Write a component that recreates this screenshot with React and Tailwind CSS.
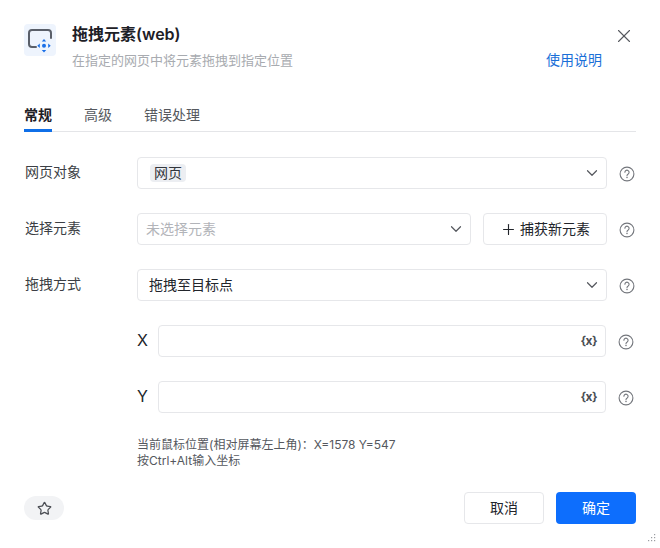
import { ChevronDown, Plus, Star, X } from "lucide-react";

const FONT = "[font-family:'Inter','Noto_Sans_CJK_SC',sans-serif]";

function Help() {
  return (
    <svg width="16" height="16" viewBox="0 0 16 16" fill="none" className="shrink-0 mt-0.5 text-[#73767c]">
      <circle cx="8" cy="8" r="6.9" stroke="currentColor" strokeWidth="1.1" />
      <path d="M5.900 6.300a2.100 2.100 0 1 1 3.300 1.700c-.8.500-1.200.900-1.200 1.700" stroke="currentColor" strokeWidth="1.100" strokeLinecap="round" />
      <circle cx="8" cy="11.600" r="0.750" fill="currentColor" />
    </svg>
  );
}

function Chevron() {
  return <ChevronDown className="w-[18px] h-[18px] text-[#55585e] shrink-0" strokeWidth={1.6} />;
}

function Row({ label, children }) {
  return (
    <div className="flex items-center mb-6">
      <div className="w-[113px] shrink-0 text-sm leading-8 text-[#3c3f45] pl-px -mt-0.5">{label}</div>
      <div className="w-[470px] shrink-0 flex gap-3">{children}</div>
      <div className="ml-3"><Help /></div>
    </div>
  );
}

function Box({ children, className = "" }) {
  return (
    <div className={`h-8 flex items-center justify-between rounded border border-[#e6e7ea] bg-white ${className}`}>
      {children}
    </div>
  );
}

function CoordRow({ label }) {
  return (
    <div className="flex items-center mb-6">
      <div className="w-[134px] shrink-0 pl-[113px] text-base leading-8 text-[#22252b] -mt-0.5">{label}</div>
      <Box className="w-[448px] pr-2">
        <span />
        <span className="text-xs font-bold text-[#4b4e54] tracking-tighter">{"{x}"}</span>
      </Box>
      <div className="ml-3"><Help /></div>
    </div>
  );
}

export default function App() {
  return (
    <div className={`${FONT} relative w-[660px] h-[548px] bg-white overflow-hidden px-6 pt-6`}>
      <div className="flex">
        <div className="w-8 h-8 rounded bg-[#eef4fd] shrink-0">
          <svg width="32" height="32" viewBox="0 0 32 32" fill="none">
            <path d="M12 23H8a3 3 0 0 1-3-3V9a3 3 0 0 1 3-3h16a3 3 0 0 1 3 3v5" stroke="#5a5f69" strokeWidth="2" strokeLinecap="round" />
            <path d="M20 15l2.200 2.500h-4.400zM20 28.400l-2.200-2.500h4.400zM13.300 21.700l2.500-2.200v4.400zM26.700 21.700l-2.500 2.200v-4.400z" fill="#1a6fe8" />
            <circle cx="20" cy="21.700" r="2" fill="#1a6fe8" />
          </svg>
        </div>
        <div className="ml-4 flex-1 min-w-0">
          <div className="text-base leading-5 font-semibold text-[#1d2026]">拖拽元素(web)</div>
          <div className="mt-[6px] flex justify-between items-center pr-[10px]">
            <span className="text-[13px] leading-5 text-[#a8abb0]">在指定的网页中将元素拖拽到指定位置</span>
            <span className="text-sm leading-5 text-[#1a6fd8]">使用说明</span>
          </div>
        </div>
        <X className="w-[22px] h-[22px] m-px text-[#55585e] shrink-0" strokeWidth={1.2} />
      </div>

      <div className="flex gap-8 mt-[35px] border-b border-[#e4e5e8] h-[27px]">
        <div className="text-sm leading-5 h-[27px] font-semibold text-[#1d2026] border-b-[3px] border-[#0f6fe8]">常规</div>
        <div className="text-sm leading-5 text-[#55585e]">高级</div>
        <div className="text-sm leading-5 text-[#55585e]">错误处理</div>
      </div>

      <div className="mt-[25px]">
        <Row label="网页对象">
          <Box className="w-full pl-3 pr-[5px]">
            <span className="h-[18px] px-1 rounded-sm bg-[#eceef2] text-sm leading-[18px] text-[#33363c]">网页</span>
            <Chevron />
          </Box>
        </Row>
        <Row label="选择元素">
          <Box className="w-[334px] pl-2 pr-[5px]">
            <span className="text-sm text-[#b2b4b9]">未选择元素</span>
            <Chevron />
          </Box>
          <div className="w-[124px] h-8 flex items-center justify-center gap-[3px] rounded border border-[#e6e7ea] text-sm text-[#22252b]">
            <Plus className="w-[17px] h-[17px]" strokeWidth={1.6} />
            捕获新元素
          </div>
        </Row>
        <Row label="拖拽方式">
          <Box className="w-full pl-[11px] pr-[5px]">
            <span className="text-sm text-[#22252b]">拖拽至目标点</span>
            <Chevron />
          </Box>
        </Row>
        <CoordRow label="X" />
        <CoordRow label="Y" />
      </div>

      <div className="mt-0 ml-[113px] text-xs leading-4 text-[#55585e]">
        <div>当前鼠标位置(相对屏幕左上角)：X=1578 Y=547</div>
        <div>按Ctrl+Alt输入坐标</div>
      </div>

      <div className="flex items-center justify-between mt-[23px]">
        <div className="w-10 h-6 rounded-full bg-[#f2f3f5] flex items-center justify-center">
          <Star className="w-[15px] h-[15px] text-[#4b4e54]" strokeWidth={2} />
        </div>
        <div className="flex gap-3">
          <div className="w-20 h-8 rounded border border-[#e6e7ea] flex items-center justify-center text-sm text-[#22252b]">取消</div>
          <div className="w-20 h-8 rounded bg-[#0d6efd] flex items-center justify-center text-sm text-white">确定</div>
        </div>
      </div>

      <svg width="9" height="9" viewBox="0 0 9 9" className="absolute right-[4px] bottom-[5px] text-[#9a9da2]" fill="currentColor">
        <rect x="7" y="0" width="1.200" height="1.200" />
        <rect x="4" y="3" width="1.200" height="1.200" /><rect x="7" y="3" width="1.200" height="1.200" />
        <rect x="1" y="6" width="1.200" height="1.200" /><rect x="4" y="6" width="1.200" height="1.200" /><rect x="7" y="6" width="1.200" height="1.200" />
      </svg>
    </div>
  );
}
